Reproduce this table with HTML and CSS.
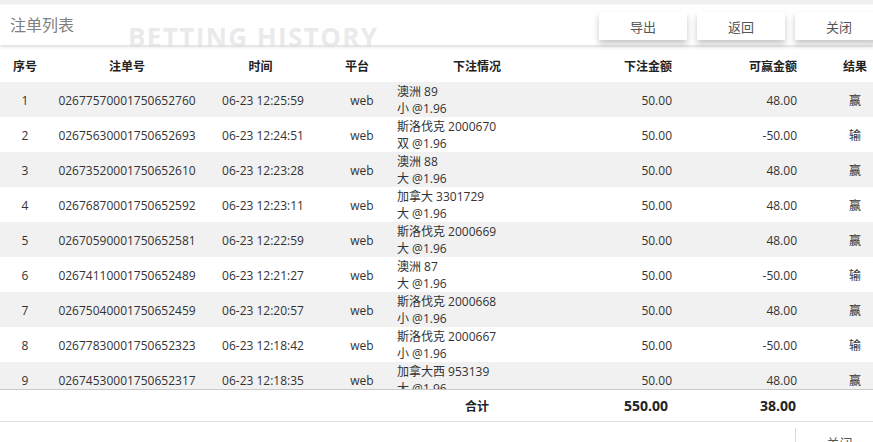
FILE: index.html
```html
<!DOCTYPE html>
<html lang="zh-CN">
<head>
<meta charset="utf-8">
<title>注单列表</title>
<link rel="stylesheet" href="styles.css">
</head>
<body>
<div class="page">
  <div class="topstrip"></div>
  <div class="bar">
    <div class="title">注单列表</div>
    <div class="actions">
      <button class="btn">导出</button>
      <button class="btn">返回</button>
      <button class="btn">关闭</button>
    </div>
  </div>
  <div class="watermark">BETTING HISTORY</div>

  <div class="grid head">
    <div class="c">序号</div>
    <div class="c">注单号</div>
    <div class="c">时间</div>
    <div class="c">平台</div>
    <div class="c">下注情况</div>
    <div class="r">下注金额</div>
    <div class="r">可赢金额</div>
    <div class="c res">结果</div>
  </div>

  <div class="body">
    <div class="grid row"><div class="c">1</div><div class="c">02677570001750652760</div><div class="c t">06-23 12:25:59</div><div class="c p">web</div><div class="l">澳洲 89<br>小 @1.96</div><div class="r">50.00</div><div class="r">48.00</div><div class="c res">赢</div></div>
    <div class="grid row"><div class="c">2</div><div class="c">02675630001750652693</div><div class="c t">06-23 12:24:51</div><div class="c p">web</div><div class="l">斯洛伐克 2000670<br>双 @1.96</div><div class="r">50.00</div><div class="r">-50.00</div><div class="c res">输</div></div>
    <div class="grid row"><div class="c">3</div><div class="c">02673520001750652610</div><div class="c t">06-23 12:23:28</div><div class="c p">web</div><div class="l">澳洲 88<br>大 @1.96</div><div class="r">50.00</div><div class="r">48.00</div><div class="c res">赢</div></div>
    <div class="grid row"><div class="c">4</div><div class="c">02676870001750652592</div><div class="c t">06-23 12:23:11</div><div class="c p">web</div><div class="l">加拿大 3301729<br>大 @1.96</div><div class="r">50.00</div><div class="r">48.00</div><div class="c res">赢</div></div>
    <div class="grid row"><div class="c">5</div><div class="c">02670590001750652581</div><div class="c t">06-23 12:22:59</div><div class="c p">web</div><div class="l">斯洛伐克 2000669<br>大 @1.96</div><div class="r">50.00</div><div class="r">48.00</div><div class="c res">赢</div></div>
    <div class="grid row"><div class="c">6</div><div class="c">02674110001750652489</div><div class="c t">06-23 12:21:27</div><div class="c p">web</div><div class="l">澳洲 87<br>大 @1.96</div><div class="r">50.00</div><div class="r">-50.00</div><div class="c res">输</div></div>
    <div class="grid row"><div class="c">7</div><div class="c">02675040001750652459</div><div class="c t">06-23 12:20:57</div><div class="c p">web</div><div class="l">斯洛伐克 2000668<br>小 @1.96</div><div class="r">50.00</div><div class="r">48.00</div><div class="c res">赢</div></div>
    <div class="grid row"><div class="c">8</div><div class="c">02677830001750652323</div><div class="c t">06-23 12:18:42</div><div class="c p">web</div><div class="l">斯洛伐克 2000667<br>小 @1.96</div><div class="r">50.00</div><div class="r">-50.00</div><div class="c res">输</div></div>
    <div class="grid row"><div class="c">9</div><div class="c">02674530001750652317</div><div class="c t">06-23 12:18:35</div><div class="c p">web</div><div class="l">加拿大西 953139<br>大 @1.96</div><div class="r">50.00</div><div class="r">48.00</div><div class="c res">赢</div></div>
  </div>

  <div class="grid total">
    <div></div><div></div><div></div><div></div>
    <div class="c">合计</div>
    <div class="r sum1">550.00</div>
    <div class="r sum2">38.00</div>
    <div></div>
  </div>

  <div class="footer">
    <button class="btn btn-foot">关闭</button>
  </div>
</div>
</body>
</html>
```

FILE: styles.css
```css
* { box-sizing: border-box; }
html, body { margin: 0; padding: 0; background: #fff; overflow: hidden; }
body {
  font-family: "Open Sans", "Noto Sans CJK SC", sans-serif;
  font-size: 12px;
  color: #333;
}
.page { position: relative; width: 873px; height: 442px; overflow: hidden; }
.topstrip { height: 5px; background: #efefef; border-bottom: 1px solid #f8f8f8; }
.bar {
  height: 40px;
  display: flex;
  align-items: flex-start;
  justify-content: space-between;
  background: #fff;
  box-shadow: 0 2px 3px rgba(0,0,0,0.13);
  position: relative;
  z-index: 1;
}
.title {
  padding-left: 10px;
  padding-top: 8px;
  font-size: 16px;
  line-height: 24px;
  color: #808080;
}
.actions { display: flex; gap: 10px; padding-top: 7px; margin-right: -10px; }
.btn {
  width: 88px;
  height: 28px;
  border: none;
  background: #fff;
  font-family: "Open Sans", "Noto Sans CJK SC", sans-serif;
  font-size: 13px;
  color: #555;
  box-shadow: 0 4px 6px rgba(0,0,0,0.22);
  padding: 0;
}
.watermark {
  position: absolute;
  left: 128px;
  top: 19px;
  z-index: 2;
  font-family: "Open Sans", sans-serif;
  font-weight: 700;
  font-size: 26px;
  letter-spacing: 1.4px;
  color: rgba(222,222,222,0.65);
  pointer-events: none;
}
.grid {
  display: grid;
  grid-template-columns: 50px 154px 113px 80px 160px 123px 125px 68px;
  align-items: center;
}
.head {
  height: 37px;
  padding-top: 4px;
  font-weight: 700;
  color: #222;
}
.c { text-align: center; }
.r { text-align: right; padding-right: 8px; }
.l { text-align: left; }
.res { padding-left: 32px; }
.t { padding-left: 5px; }
.p { padding-left: 10px; }
.body { height: 307px; overflow: hidden; }
.row { height: 35px; line-height: 17px; padding-top: 1px; }
.row:nth-child(odd) { background: #f1f1f1; }
.total {
  height: 33px;
  border-top: 1px solid #c9c9c9;
  border-bottom: 1px solid #dcdcdc;
  font-weight: 700;
  font-size: 13px;
  color: #222;
}
.total .c { font-size: 12px; }
.sum1 { padding-right: 12px; font-size: 14px; }
.sum2 { padding-right: 9px; font-size: 14px; }
.footer { display: flex; padding-top: 6px; padding-left: 795px; }
.btn-foot { flex: none; border-left: 1px solid #d8d8d8; box-shadow: none; height: 28px; }
```
